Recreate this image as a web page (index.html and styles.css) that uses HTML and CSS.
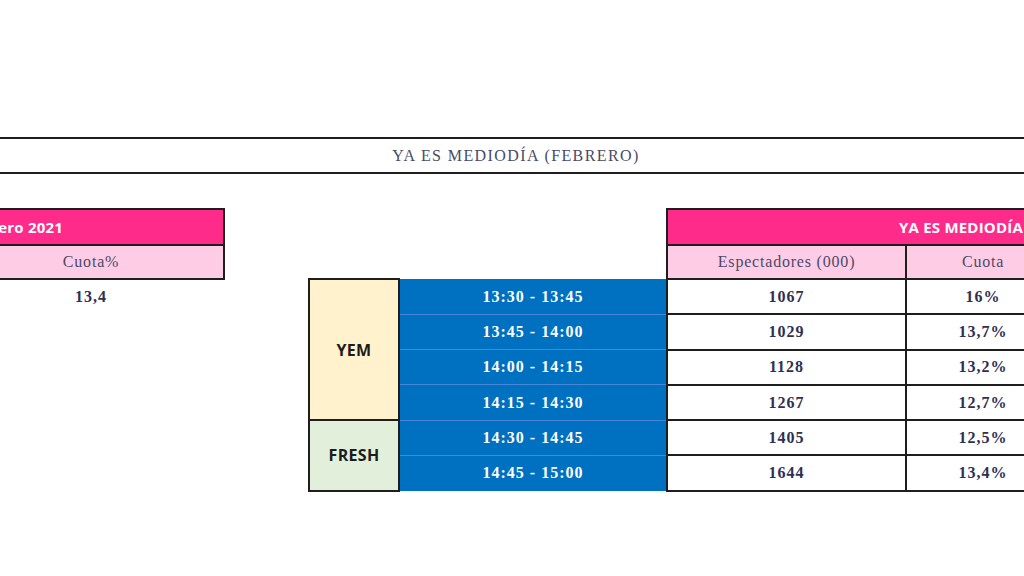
FILE: index.html
```html
<!DOCTYPE html>
<html lang="es">
<head>
<meta charset="utf-8">
<title>Ya es mediodía (febrero)</title>
<link rel="stylesheet" href="styles.css">
</head>
<body>
<div class="page">
  <div class="banner">YA ES MEDIODÍA (FEBRERO)</div>
  <table class="sheet">
    <colgroup>
      <col class="c-a"><col class="c-b"><col class="c-c"><col class="c-d"><col class="c-e"><col class="c-f"><col class="c-g">
    </colgroup>
    <tr class="r-head">
      <td class="hot hot-left" colspan="2">Febrero 2021</td>
      <td class="empty" colspan="3"></td>
      <td class="hot hot-right" colspan="2">YA ES MEDIODÍA</td>
    </tr>
    <tr class="r-sub">
      <td class="soft"></td>
      <td class="soft">Cuota%</td>
      <td class="empty" colspan="3"></td>
      <td class="soft">Espectadores (000)</td>
      <td class="soft">Cuota</td>
    </tr>
    <tr class="r-data">
      <td class="empty"></td>
      <td class="plain num">13,4</td>
      <td class="empty"></td>
      <td class="label yem" rowspan="4">YEM</td>
      <td class="slot first">13:30 - 13:45</td>
      <td class="cell num">1067</td>
      <td class="cell num">16%</td>
    </tr>
    <tr class="r-data">
      <td class="empty"></td><td class="empty"></td><td class="empty"></td>
      <td class="slot">13:45 - 14:00</td>
      <td class="cell num">1029</td>
      <td class="cell num">13,7%</td>
    </tr>
    <tr class="r-data">
      <td class="empty"></td><td class="empty"></td><td class="empty"></td>
      <td class="slot">14:00 - 14:15</td>
      <td class="cell num">1128</td>
      <td class="cell num">13,2%</td>
    </tr>
    <tr class="r-data">
      <td class="empty"></td><td class="empty"></td><td class="empty"></td>
      <td class="slot">14:15 - 14:30</td>
      <td class="cell num">1267</td>
      <td class="cell num">12,7%</td>
    </tr>
    <tr class="r-data">
      <td class="empty"></td><td class="empty"></td><td class="empty"></td>
      <td class="label fresh" rowspan="2">FRESH</td>
      <td class="slot">14:30 - 14:45</td>
      <td class="cell num">1405</td>
      <td class="cell num">12,5%</td>
    </tr>
    <tr class="r-data">
      <td class="empty"></td><td class="empty"></td><td class="empty"></td>
      <td class="slot last">14:45 - 15:00</td>
      <td class="cell num">1644</td>
      <td class="cell num">13,4%</td>
    </tr>
  </table>
</div>
</body>
</html>
```
FILE: styles.css
```css
html, body {
  margin: 0;
  padding: 0;
  background: #ffffff;
}

.page {
  width: 1024px;
  height: 576px;
  overflow: hidden;
  padding-top: 137px;
  box-sizing: border-box;
  font-family: "Liberation Serif", "Times New Roman", serif;
}

.banner {
  border-top: 2px solid #1e1e1e;
  border-bottom: 2px solid #1e1e1e;
  height: 33px;
  line-height: 34px;
  text-align: center;
  font-size: 16px;
  letter-spacing: 1.4px;
  color: #4a4a66;
  padding-left: 8px;
}

.sheet {
  margin-top: 34px;
  margin-left: -201px;
  border-collapse: collapse;
  table-layout: fixed;
  width: 1260px;
}

.c-a { width: 158px; }
.c-b { width: 266px; }
.c-c { width: 85px; }
.c-d { width: 90px; }
.c-e { width: 268px; }
.c-f { width: 239px; }
.c-g { width: 154px; }

.sheet td {
  padding: 0;
  text-align: center;
  vertical-align: middle;
  white-space: nowrap;
  overflow: hidden;
}

.r-head td { height: 34px; }
.r-sub td { height: 32px; }
.r-data td { height: 33.3px; }

.hot {
  background: #ff2b8a;
  border: 2px solid #1e1e1e;
  color: #ffffff;
  font-family: "Open Sans", "Liberation Sans", sans-serif;
  font-weight: 700;
  font-size: 15px;
  letter-spacing: 0.2px;
}

.hot-left {
  text-align: right !important;
  padding-right: 160px !important;
}

.hot-right {
  text-align: left !important;
  padding-left: 231px !important;
}

.soft {
  background: #ffcce6;
  border: 2px solid #1e1e1e;
  color: #4a4a66;
  font-size: 16px;
  letter-spacing: 0.8px;
}

.empty {
  border: none;
}

.plain {
  border: none;
}

.num {
  font-weight: 700;
  font-size: 16px;
  letter-spacing: 1px;
  color: #2f2f52;
}

.label {
  border: 2px solid #1e1e1e;
  font-family: "Open Sans", "Liberation Sans", sans-serif;
  font-weight: 700;
  font-size: 16px;
  letter-spacing: 0.3px;
  color: #1c1c1c;
}

.yem { background: #fff2cc; }
.fresh { background: #e2efda; }

.slot {
  background: #0070c0;
  color: #ffffff;
  font-weight: 700;
  font-size: 16px;
  letter-spacing: 1px;
  border-top: 1px solid #4a86d8;
  border-bottom: 1px solid #4a86d8;
}

.slot.first { border-top: 1px solid #0070c0; }
.slot.last { border-bottom: 1px solid #0070c0; }

.cell {
  background: #ffffff;
  border: 2px solid #1e1e1e;
}
```
